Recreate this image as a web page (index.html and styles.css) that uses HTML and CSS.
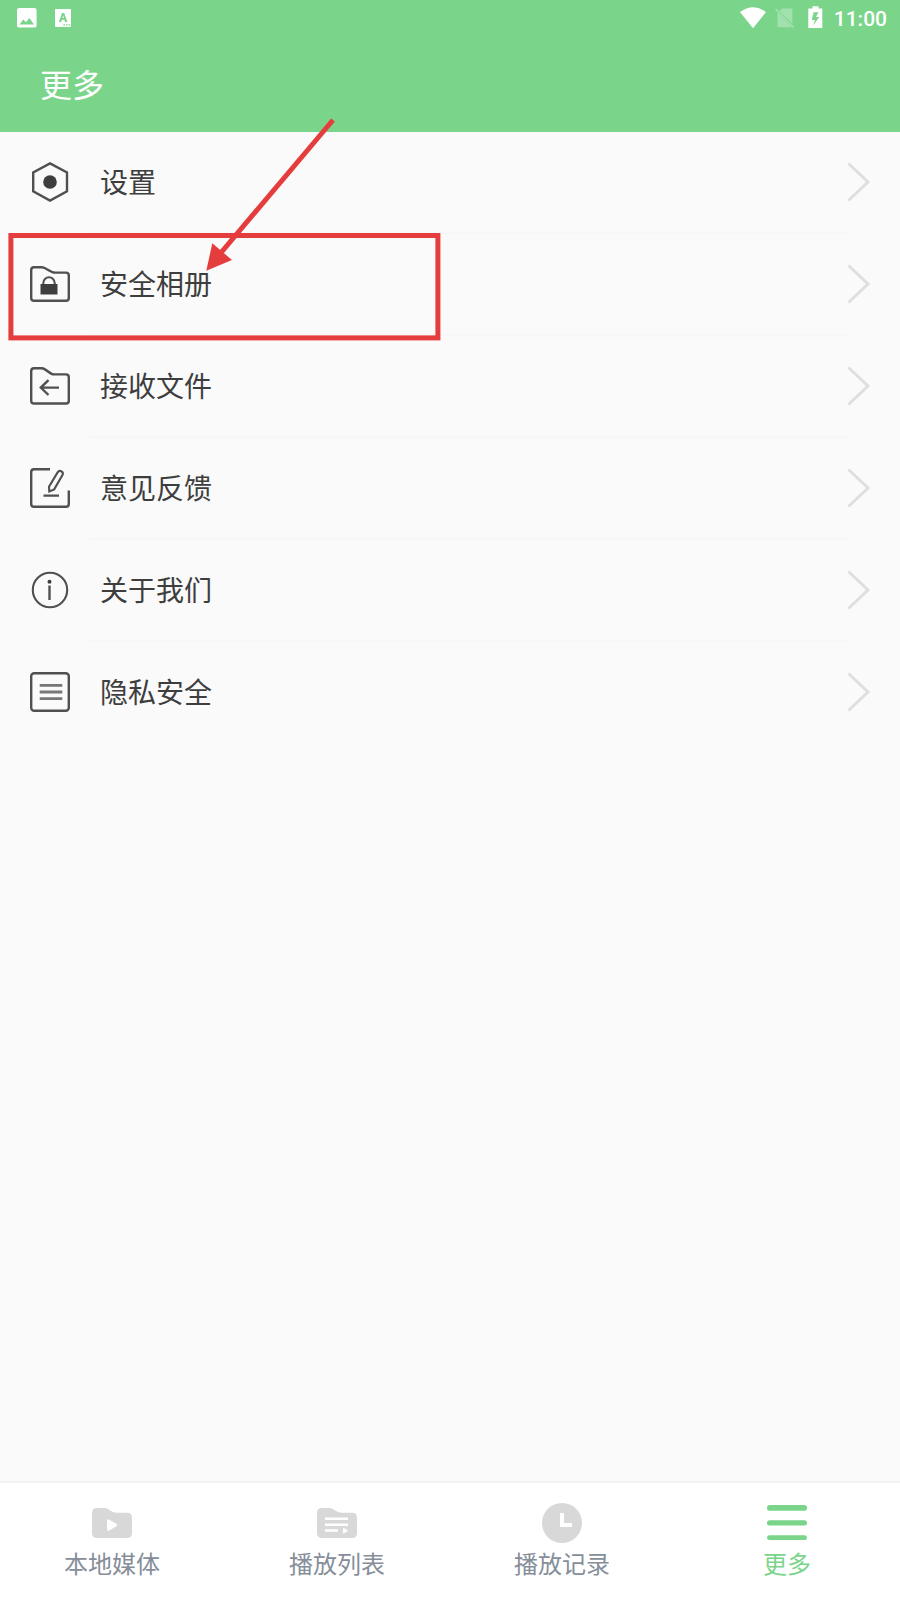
FILE: index.html
```html
<!DOCTYPE html>
<html lang="zh-CN">
<head>
<meta charset="utf-8">
<title>更多</title>
<link rel="stylesheet" href="styles.css">
</head>
<body>
<div class="screen">
  <header class="header">
    <div class="status">
      <svg class="status-left" width="56" height="20" viewBox="0 0 56 20">
        <path fill="#fff" fill-rule="evenodd" d="M2.2 0H17.4Q19.6 0 19.6 2.2V17.4Q19.6 19.6 17.4 19.6H2.2Q0 19.6 0 17.4V2.2Q0 0 2.2 0ZM2.6 16.4H17L12.4 10L9 14.2L6.2 11.6Z"/>
        <path fill="#fff" fill-rule="evenodd" d="M38.5 1H53Q54 1 54 2V18Q54 19 53 19H39Q38 19 38 18V2Q38 1 38.5 1ZM41.8 14H44L44.8 11.8H47.4L48.2 14H50.4L47.2 5H45ZM45.3 10L46.1 7.6L46.9 10ZM46.4 16.2V17.6H48V16.2ZM49 16.2V17.6H50.6V16.2ZM51.6 16.2V17.6H53.2V16.2Z"/>
      </svg>
      <div class="status-right">
        <svg width="84" height="24" viewBox="0 0 84 24">
          <path fill="#fff" d="M0 6.1Q13 -3.5 26 6.1L13 22.2Z"/>
          <g fill="#fff" opacity=".3">
            <path d="M42.5 2.6H51Q52.4 2.6 52.4 4V17.6L39.3 4.9Z"/>
            <path d="M37.5 6.6L51.6 21.2H39Q37.5 21.2 37.5 19.7Z"/>
            <path d="M35 3.6L36.2 2.5L54.2 20.8L53 22Z"/>
          </g>
          <path fill="#fff" fill-rule="evenodd" d="M72.5 .2H78.5V2.4H82.3V22H68.3V2.4H72.5ZM73.6 6.3L71.8 14H75L73.2 19.4L79.2 11H75.8L78.6 6.3Z"/>
        </svg>
        <span class="clock">11:00</span>
      </div>
    </div>
    <h1 class="title">更多</h1>
  </header>

  <main class="list">
    <div class="row">
      <svg class="icon" viewBox="0 0 40 40"><path d="M20 1.4L37 10.4V29.4L20 38.6L3.2 29.4V10.4Z"/><circle class="solid" cx="20" cy="20" r="6.8"/></svg>
      <span class="label">设置</span>
      <svg class="chevron" viewBox="0 0 24 40"><path d="M1.5 1.5L21 20L1.5 38.5"/></svg>
    </div>
    <div class="row">
      <svg class="icon" viewBox="0 0 40 40"><path d="M4 3.2H12C16 3.2 20 8.6 25 8.6H36Q38.8 8.6 38.8 11.4V34Q38.8 36.8 36 36.8H4Q1.2 36.8 1.2 34V6Q1.2 3.2 4 3.2Z"/><path class="solid" d="M10.5 20H27.5V30.5H10.5Z"/><path class="thin" d="M13.3 20V19A5.7 5.7 0 0 1 24.7 19V20"/></svg>
      <span class="label">安全相册</span>
      <svg class="chevron" viewBox="0 0 24 40"><path d="M1.5 1.5L21 20L1.5 38.5"/></svg>
    </div>
    <div class="row">
      <svg class="icon" viewBox="0 0 40 40"><path d="M4 2.2H12C16 2.2 19 8.4 24 8.4H36Q38.8 8.4 38.8 11.2V34.7Q38.8 37.5 36 37.5H4Q1.2 37.5 1.2 34.7V5Q1.2 2.2 4 2.2Z"/><path d="M29 21.6H10.8M18.5 14.2L10.8 21.6L18.5 29"/></svg>
      <span class="label">接收文件</span>
      <svg class="chevron" viewBox="0 0 24 40"><path d="M1.5 1.5L21 20L1.5 38.5"/></svg>
    </div>
    <div class="row">
      <svg class="icon" viewBox="0 0 40 40"><path d="M20 1.2H4Q1.2 1.2 1.2 4V36Q1.2 38.8 4 38.8H36Q38.8 38.8 38.8 36V22.5M13.5 27.6H29"/><path class="thin" d="M27.6 4.4Q29 2.2 31.3 3.2Q33.6 4.4 32.6 6.9L24.2 21.4L19.3 23.4L19 18.8Z"/></svg>
      <span class="label">意见反馈</span>
      <svg class="chevron" viewBox="0 0 24 40"><path d="M1.5 1.5L21 20L1.5 38.5"/></svg>
    </div>
    <div class="row">
      <svg class="icon" viewBox="0 0 40 40"><circle class="thin" cx="20" cy="20" r="17.2"/><path d="M19.5 15.5V30"/><circle class="solid" cx="19.5" cy="11.7" r="2"/></svg>
      <span class="label">关于我们</span>
      <svg class="chevron" viewBox="0 0 24 40"><path d="M1.5 1.5L21 20L1.5 38.5"/></svg>
    </div>
    <div class="row">
      <svg class="icon" viewBox="0 0 40 40"><rect x="1.2" y="1.2" width="37.6" height="37.6" rx="3"/><path class="lines" d="M9.7 13.3H32.3M9.7 20H32.3M9.7 26.7H32.3"/></svg>
      <span class="label">隐私安全</span>
      <svg class="chevron" viewBox="0 0 24 40"><path d="M1.5 1.5L21 20L1.5 38.5"/></svg>
    </div>
  </main>

  <nav class="tabs">
    <div class="tab">
      <svg class="tab-icon" viewBox="0 0 40 40"><path d="M5 5H12C17 5 19 9.8 25 9.8H35Q40 9.8 40 14.8V30Q40 35 35 35H5Q0 35 0 30V10Q0 5 5 5Z"/><path class="cut" d="M15 18Q15 15.5 17.3 16.7L24 20.6Q26 22 24 23.4L17.3 27.4Q15 28.6 15 26Z"/></svg>
      <span>本地媒体</span>
    </div>
    <div class="tab">
      <svg class="tab-icon" viewBox="0 0 40 40"><path d="M5 5H12C17 5 19 9.8 25 9.8H35Q40 9.8 40 14.8V30Q40 35 35 35H5Q0 35 0 30V10Q0 5 5 5Z"/><path class="cut" d="M8 14.4H31V17H8ZM8 20.5H31V23.1H8ZM8 26.3H21V28.8H8ZM26 25.8Q26 24.6 27.2 25.2L30.2 27Q31.2 27.7 30.2 28.4L27.2 30.2Q26 30.8 26 29.6Z"/></svg>
      <span>播放列表</span>
    </div>
    <div class="tab">
      <svg class="tab-icon" viewBox="0 0 40 40"><circle cx="20" cy="20" r="20"/><path class="cut" d="M18 10H22V20H30V24H18Z"/></svg>
      <span>播放记录</span>
    </div>
    <div class="tab active">
      <svg class="tab-icon" viewBox="0 0 40 40"><rect y="2" width="40" height="5.7" rx="2.8"/><rect y="17.2" width="40" height="5.4" rx="2.7"/><rect y="32.2" width="40" height="4.9" rx="2.45"/></svg>
      <span>更多</span>
    </div>
  </nav>

  <svg class="annotation" width="450" height="350" viewBox="0 0 450 350">
    <rect x="10.9" y="235.5" width="427" height="102.4"/>
    <path d="M333 120L219 255"/>
    <path class="head" d="M206.3 270.8L212.3 243.3L232 260Z"/>
  </svg>
</div>
</body>
</html>
```
FILE: styles.css
```css
* { box-sizing: border-box; }

body {
  margin: 0;
  font-family: "Noto Sans CJK SC", sans-serif;
  background: #fafafa;
}

.screen {
  position: relative;
  display: flex;
  flex-direction: column;
  width: 900px;
  height: 1600px;
}

.header {
  height: 132px;
  background: #7ad58a;
  color: #fff;
}

.status {
  display: flex;
  justify-content: space-between;
  height: 36px;
  padding: 6px 13px 0 17px;
}

.status-left { margin-top: 2px; }

.status-right {
  display: flex;
  gap: 10px;
}

.clock {
  font: 500 21px/26px Roboto, sans-serif;
}

.title {
  margin: 0;
  padding-left: 40px;
  font-size: 32px;
  font-weight: 400;
  line-height: 94px;
}

.list { flex: 1; }

.row {
  display: grid;
  grid-template-columns: 40px 1fr 24px;
  align-items: center;
  column-gap: 30px;
  height: 102px;
  padding: 0 29px 2px 30px;
  background: linear-gradient(#f7f7f7, #f7f7f7) 90px 100px / 760px 2px no-repeat;
}

.row:last-child { background: none; }

.icon {
  width: 40px;
  height: 40px;
  fill: none;
  stroke: #505050;
  stroke-width: 2.4;
}

.icon .thin { stroke-width: 2.1; }

.icon .solid {
  fill: #3e3e3e;
  stroke: none;
}

.icon .lines {
  stroke: #777;
  stroke-width: 2.8;
}

.label {
  padding-bottom: 2px;
  font-size: 28px;
  line-height: 40px;
  color: #3e3e3e;
}

.chevron {
  width: 24px;
  height: 40px;
  fill: none;
  stroke: #dedede;
  stroke-width: 2.8;
}

.tabs {
  display: grid;
  grid-template-columns: repeat(4, 1fr);
  height: 119px;
  border-top: 2px solid #f2f2f2;
  background: #fff;
}

.tab {
  display: flex;
  flex-direction: column;
  align-items: center;
  padding: 20px 1px 0 0;
  font-size: 24px;
  line-height: 36px;
  color: #858e99;
}

.tab-icon {
  width: 40px;
  height: 40px;
  margin-bottom: 2px;
  fill: #d8d8d8;
}

.tab-icon .cut { fill: #fff; }

.active { color: #7ad58a; }

.active .tab-icon { fill: #7ad58a; }

.annotation {
  position: absolute;
  top: 0;
  left: 0;
  fill: none;
  stroke: #e53d3d;
  stroke-width: 5;
}

.annotation .head {
  fill: #e53d3d;
  stroke: none;
}
```
